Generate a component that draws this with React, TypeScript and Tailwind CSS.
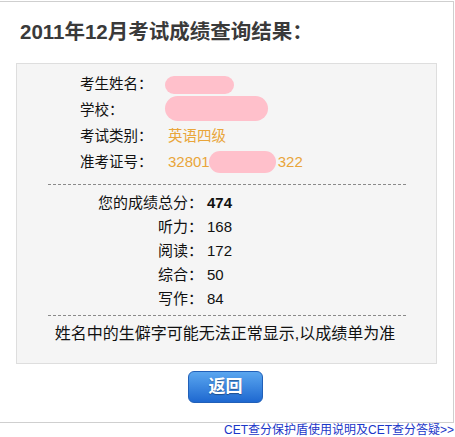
import React from "react";

const font = { fontFamily: '"Liberation Sans", Arial, "Noto Sans CJK SC", sans-serif' };

function Dash() {
  return (
    <div
      className="ml-[31px] w-[358px] h-px"
      style={{
        backgroundImage:
          "linear-gradient(to right, #8a8a8a 0, #8a8a8a 3px, transparent 3px, transparent 5px)",
        backgroundSize: "5px 1px",
      }}
    />
  );
}

function Blob({ className }: { className: string }) {
  return <span className={"absolute rounded-full bg-[#ffc0cb] " + className} />;
}

export default function App() {
  const scores: [string, string, boolean][] = [
    ["您的成绩总分：", "474", true],
    ["听力：", "168", false],
    ["阅读：", "172", false],
    ["综合：", "50", false],
    ["写作：", "84", false],
  ];
  return (
    <div className="w-[455px] h-[437px] bg-white" style={font}>
      <div className="mt-px w-[454px] h-[422px] border-t border-r border-b border-[#cfcfcf] flex flex-col">
        <div className="ml-[20px] mt-[20px] text-[20.5px] leading-[20px] font-bold text-[#3a3a3a]">
          2011年12月考试成绩查询结果：
        </div>
        <div className="ml-[16px] mt-[21px] w-[421px] h-[301px] border border-[#dedede] bg-[#f5f5f5] text-[14.5px] text-[#111]">
          <div className="pl-[63px] pt-[7px] leading-[26px]">
            <div className="flex">
              <span className="w-[88px]">考生姓名：</span>
              <span className="relative">
                <Blob className="left-[-3px] top-[5px] w-[69px] h-[18px]" />
              </span>
            </div>
            <div className="flex">
              <span className="w-[88px]">学校：</span>
              <span className="relative">
                <Blob className="left-[-3px] top-[-1px] w-[103px] h-[25px]" />
              </span>
            </div>
            <div className="flex">
              <span className="w-[88px]">考试类别：</span>
              <span className="text-[#e9a53a]">英语四级</span>
            </div>
            <div className="flex">
              <span className="w-[88px]">准考证号：</span>
              <span className="text-[#e9a53a] flex text-[15px]">
                <span>32801</span>
                <span className="relative inline-block w-[68px]">
                  <Blob className="left-[-1px] top-[2px] w-[67px] h-[22px]" />
                </span>
                <span>322</span>
              </span>
            </div>
          </div>
          <div className="mt-[9px]">
            <Dash />
          </div>
          <div className="pt-[6px] leading-[24px] text-[15px]">
            {scores.map(([l, v, b]) => (
              <div key={l} className="flex">
                <span className="w-[186px] text-right">{l}</span>
                <span className={"pl-[4px] " + (b ? "font-bold" : "")}>{v}</span>
              </div>
            ))}
          </div>
          <div className="mt-[4px]">
            <Dash />
          </div>
          <div className="mt-[6px] text-center text-[16px] leading-[24px] pr-[3px]">
            姓名中的生僻字可能无法正常显示,以成绩单为准
          </div>
        </div>
        <div className="ml-[188px] mt-[7px] w-[75px] h-[32px] rounded-[6px] border border-[#2160b8] bg-gradient-to-b from-[#5aa6ef] to-[#1e68d0] flex items-center justify-center text-white font-bold text-[17px] [text-shadow:0_1px_1px_rgba(0,0,0,0.35)]">
          返回
        </div>
      </div>
      <div className="text-right text-[12px] leading-[14px] text-[#1a36c8] pr-px">
        CET查分保护盾使用说明及CET查分答疑&gt;&gt;
      </div>
    </div>
  );
}
